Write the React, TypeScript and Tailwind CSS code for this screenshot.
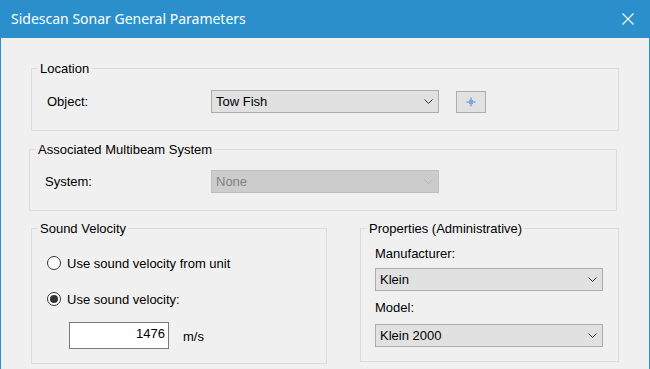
import React from "react";

const body = { fontFamily: '"Liberation Sans", Arial, sans-serif' };

function Chevron({ color }: { color: string }) {
  return (
    <svg width="9" height="5" viewBox="0 0 9 5" className="shrink-0">
      <path d="M0.5 0.5 L4.5 4.5 L8.5 0.5" fill="none" stroke={color} strokeWidth="1" />
    </svg>
  );
}

function Select({ text, disabled, w }: { text: string; disabled?: boolean; w: string }) {
  return (
    <div
      className={`${w} h-[23px] flex items-center justify-between pl-[4px] pr-[5px] border ${
        disabled ? "bg-[#cccccc] border-[#bfbfbf] text-[#838383]" : "bg-[#e1e1e1] border-[#adadad] text-black"
      }`}
    >
      <span className="leading-[15px]">{text}</span>
      <Chevron color={disabled ? "#b4b4b4" : "#333333"} />
    </div>
  );
}

function Group({
  title,
  className,
  children,
}: {
  title: string;
  className: string;
  children: React.ReactNode;
}) {
  return (
    <fieldset className={`border border-[#dcdcdc] p-0 m-0 min-w-0 ${className}`}>
      <legend className="ml-[6px] px-[2px] leading-[15px] text-black">{title}</legend>
      {children}
    </fieldset>
  );
}

function Radio({ checked, label }: { checked?: boolean; label: string }) {
  return (
    <div className="flex items-center gap-[6px] h-[16px]">
      <div className="w-[14px] h-[14px] rounded-full border border-[#333333] bg-white flex items-center justify-center">
        {checked && <div className="w-[8px] h-[8px] rounded-full bg-[#333333]" />}
      </div>
      <span className="leading-[15px]">{label}</span>
    </div>
  );
}

export default function App() {
  return (
    <div
      className="w-[650px] h-[369px] overflow-hidden bg-[#f0f0f0] border-x border-[#2b8fcc] flex flex-col text-[13px] text-black"
      style={body}
    >
      <div className="h-[38px] shrink-0 bg-[#2b8fcc] flex items-center justify-between pl-[10px] pr-[15px]">
        <span
          className="text-white text-[14px] leading-[20px]"
          style={{ fontFamily: '"Noto Sans", "Open Sans", sans-serif' }}
        >
          Sidescan Sonar General Parameters
        </span>
        <svg width="12" height="12" viewBox="0 0 12 12">
          <path d="M0.5 0.5 L11.5 11.5 M11.5 0.5 L0.5 11.5" stroke="white" strokeWidth="1.1" />
        </svg>
      </div>

      <Group title="Location" className="ml-[30px] mt-[23px] w-[588px]">
        <div className="flex items-center pl-[15px] pt-[14px] pb-[17px]">
          <span className="w-[164px] leading-[15px]">Object:</span>
          <Select text="Tow Fish" w="w-[228px]" />
          <div className="ml-[17px] w-[30px] h-[22px] bg-[#e1e1e1] border border-[#adadad] flex items-center justify-center">
            <svg width="10" height="10" viewBox="0 0 10 10">
              <path d="M5 0.5 V9.5 M0.5 5 H9.5" stroke="#8fb8e4" strokeWidth="2.2" />
              <rect x="3" y="3" width="4" height="4" fill="#7aa9dd" />
            </svg>
          </div>
        </div>
      </Group>

      <Group title="Associated Multibeam System" className="ml-[28px] mt-[11px] w-[588px]">
        <div className="flex items-center pl-[15px] pt-[13px] pb-[17px]">
          <span className="w-[166px] leading-[15px]">System:</span>
          <Select text="None" disabled w="w-[228px]" />
        </div>
      </Group>

      <div className="flex ml-[30px] mt-[10px] gap-[33px] items-start">
        <Group title="Sound Velocity" className="w-[296px]">
          <div className="flex flex-col pl-[15px] pt-[19px] pb-[14px]">
            <Radio label="Use sound velocity from unit" />
            <div className="mt-[20px]">
              <Radio checked label="Use sound velocity:" />
            </div>
            <div className="flex items-center mt-[15px] ml-[22px]">
              <div className="w-[100px] h-[27px] bg-white border border-[#7a7a7a] flex justify-end pr-[3px] pt-[3px]">
                <span className="leading-[15px]">1476</span>
              </div>
              <span className="ml-[14px] pt-[2px] leading-[15px]">m/s</span>
            </div>
          </div>
        </Group>

        <Group title="Properties (Administrative)" className="w-[259px]">
          <div className="flex flex-col pl-[14px] pt-[10px] pb-[14px]">
            <span className="leading-[15px]">Manufacturer:</span>
            <div className="mt-[7px]">
              <Select text="Klein" w="w-[228px]" />
            </div>
            <span className="leading-[15px] mt-[9px]">Model:</span>
            <div className="mt-[9px]">
              <Select text="Klein 2000" w="w-[228px]" />
            </div>
          </div>
        </Group>
      </div>
    </div>
  );
}
